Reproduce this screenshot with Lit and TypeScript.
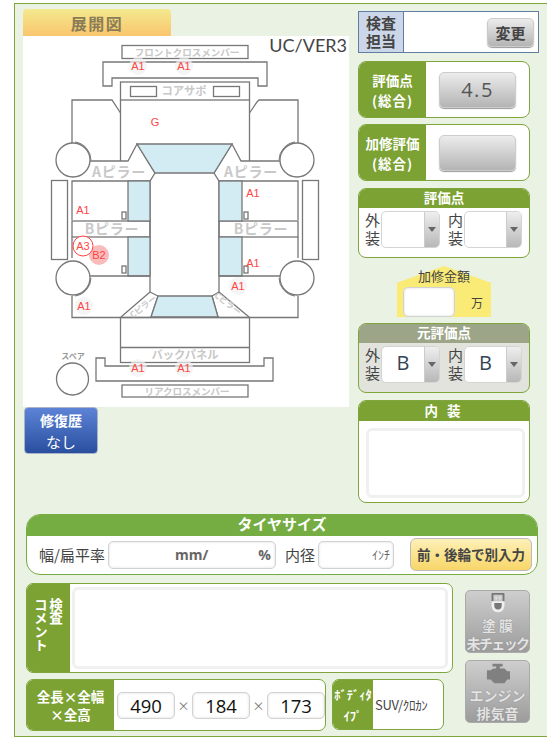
import { LitElement, html, css, svg } from "lit";
import { customElement } from "lit/decorators.js";

const marks: [number, number][] = [[138, 70], [184, 70], [138, 372], [184, 372], [238, 290], [84, 310]];

function diagram() {
  return html`<svg class="car" viewBox="23 36 326 371" width="326" height="371">
    <g class="ln">
      <rect x="122" y="45.5" width="126" height="13"/>
      <path d="M103 86V62H267V86H258V78H112V86Z"/>
      <rect x="120.5" y="82" width="129" height="18"/>
      <rect x="130.500" y="86.500" width="26" height="10"/>
      <rect x="213.500" y="86.500" width="26" height="10"/>
      <path d="M120.500 100V161M249.500 100V161"/>
      <path d="M120.500 113L112 100H72V143M249.500 113L257 102L259 100H298V143"/>
      <path d="M90 161H128L137 144L155 173L150 181H72V220M280 161H241L232 144L214 173L219 181H298V220"/>
      <path class="glass" d="M137 144H232L214 173H155Z"/>
      <path d="M150 181V292M219 181V292"/>
      <rect x="72" y="221" width="78" height="16"/>
      <rect x="219" y="221" width="79" height="16"/>
      <path d="M72 237V258M298 237V258"/>
      <rect class="glass" x="128" y="181" width="22" height="40"/>
      <rect class="glass" x="128" y="237" width="22" height="39"/>
      <rect class="glass" x="219" y="181" width="23" height="40"/>
      <rect class="glass" x="219" y="237" width="23" height="39"/>
      <path d="M90 276H150M219 276H280"/>
      <rect x="122" y="212" width="4" height="7"/>
      <rect x="244" y="212" width="4" height="7"/>
      <rect x="122" y="266" width="4" height="7"/>
      <rect x="244" y="266" width="4" height="7"/>
      <rect x="51.500" y="180.500" width="16" height="79"/>
      <rect x="302.500" y="180.500" width="16" height="79"/>
      <path d="M72 296V317.500H298V296"/>
      <path d="M150 292L121 317M150 292L158 296L151 317M219 292L249 317M219 292L212 296L218 317"/>
      <path class="glass" d="M158 296H212L218 317H151Z"/>
      <rect x="120.500" y="317.500" width="129" height="45"/>
      <path d="M120.500 347.500H249.500"/>
      <path d="M96 358H105V366H264V358H273V381H96Z"/>
      <rect x="122" y="385" width="126" height="12"/>
      <circle class="tire" cx="73" cy="160" r="17"/>
      <circle class="tire" cx="297" cy="160" r="17"/>
      <circle class="tire" cx="73" cy="278" r="17"/>
      <circle class="tire" cx="297" cy="278" r="17"/>
      <path class="thin" d="M75 142A18.500 18.500 0 0 1 91 160M295 142A18.500 18.500 0 0 0 279 160M75 296A18.500 18.500 0 0 0 91 278M295 296A18.500 18.500 0 0 1 279 278"/>
      <circle cx="72.500" cy="379" r="16"/>
    </g>
    <g class="part">
      <text x="187" y="55.500" class="s10">フロントクロスメンバー</text>
      <text x="184" y="95" class="s12">コアサポ</text>
      <text x="119" y="177" class="s15">Aピラー</text>
      <text x="251" y="177" class="s15">Aピラー</text>
      <text x="112" y="234" class="s15">Bピラー</text>
      <text x="261" y="234" class="s15">Bピラー</text>
      <text x="185" y="359" class="s12">バックパネル</text>
      <text x="187" y="395" class="s10">リアクロスメンバー</text>
      <text x="73" y="359" class="s8">スペア</text>
      <text transform="translate(145 309) rotate(-38)" class="s9">Cピラー</text>
      <text transform="translate(226 306) rotate(38)" class="s9">Cピラー</text>
    </g>
    ${marks.map(([x, y]) => svg`<circle class="halo" cx=${x} cy=${y - 4} r="9"/><text class="mk" x=${x} y=${y}>A1</text>`)}
    <text class="mk" x="155" y="126">G</text>
    <text class="mk" x="253" y="197">A1</text>
    <text class="mk" x="83" y="214">A1</text>
    <text class="mk" x="253" y="267">A1</text>
    <circle class="b2" cx="99" cy="255" r="10"/>
    <text class="mk" x="99" y="259">B2</text>
    <circle class="a3" cx="83" cy="246" r="10"/>
    <text class="mk" x="83" y="250">A3</text>
    <text class="ver" x="347" y="52">UC/VER3</text>
  </svg>`;
}

function sel(label: string, value: string) {
  return html`<div class="lb">${label}<br />装</div>
    <div class="sel"><div class="val">${value}</div><div class="arr"><i></i></div></div>`;
}

@customElement("app-root")
export class AppRoot extends LitElement {
  static styles = css`
    :host { display: block; width: 547px; height: 749px; overflow: hidden; background: #fff;
      font-family: "Noto Sans CJK JP", sans-serif; color: #444; }
    .frame { box-sizing: border-box; width: 560px; height: 734px; margin: 3px 0 0 14px; padding: 5px 0 0 8px;
      background: #eaf2e3; border: 1px solid #7ea63c; border-right: 0; }
    .top { display: flex; gap: 9px; align-items: flex-start; }
    .left { width: 326px; display: flex; flex-direction: column; align-items: flex-start; }
    .tab { box-sizing: border-box; width: 148px; height: 27px; border-radius: 4px 4px 0 0;
      background: linear-gradient(#f4e98e, #f9c56e); color: #8a7c55; font-weight: 700; font-size: 16px;
      letter-spacing: 1.500px; display: flex; align-items: center; justify-content: center; }
    .board { width: 326px; height: 371px; background: #fff; }
    .car { display: block; }
    .ln * { fill: none; stroke: #777; stroke-width: 1.300; }
    .ln .glass { fill: #d3ebf3; }
    .ln .tire { fill: #fff; }
    .ln .thin { stroke-width: 1; }
    .part text { fill: #c8c8c8; text-anchor: middle; font-weight: 700; }
    .part .s8 { font-size: 8px; fill: #999; }
    .s9 { font-size: 8.500px; }
    .s10 { font-size: 9.500px; }
    .s12 { font-size: 11.300px; }
    .s15 { font-size: 14px; letter-spacing: .7px; }
    .mk { fill: #f44; font: 11px "Liberation Sans", sans-serif; text-anchor: middle; }
    .halo { fill: #f1f1f1; opacity: .7; }
    .b2 { fill: #f9bcbc; }
    .a3 { fill: #fff; stroke: #f44; stroke-width: 1; }
    .ver { font: 18px Lato, sans-serif; fill: #444; text-anchor: end; }
    .fix { box-sizing: border-box; width: 74px; height: 47px; margin: 0 0 0 1px; border-radius: 4px; border: 1px solid #aab4c8;
      background: linear-gradient(#5c83d6, #2a4f9f); color: #fff; display: flex; flex-direction: column; align-items: center;
      font-size: 15px; line-height: 21px; padding-top: 2px; }
    .fix b { font-size: 14px; }
    .right { width: 181px; margin-top: 2px; display: flex; flex-direction: column; }
    .insp { box-sizing: border-box; height: 42px; display: flex; border: 1px solid #5f7ea0; background: #fff; align-items: stretch; margin-bottom: 8px; }
    .insp-l { width: 44px; background: #cbd6e8; border-right: 1px solid #5f7ea0; font-weight: 700; font-size: 15px; line-height: 18px;
      display: flex; align-items: center; justify-content: center; text-align: center; color: #444; }
    .insp-r { flex: 1; display: flex; align-items: center; justify-content: flex-end; padding-right: 4px; }
    .gbtn { background: linear-gradient(#ececec, #b4b4b4); border: 1px solid #ccc; border-radius: 5px; box-shadow: 0 1px 1px #999;
      box-sizing: border-box; display: flex; align-items: center; justify-content: center; }
    .chg { width: 47px; height: 29px; font-weight: 700; font-size: 15px; color: #444; }
    .box { box-sizing: border-box; width: 172px; border: 1px solid #7ea63c; border-radius: 8px; background: #fff; overflow: hidden; }
    .score { height: 57px; display: flex; align-items: stretch; margin-bottom: 6px; }
    .score-l { width: 67px; background: #7ba233; color: #fff; font-weight: 700; font-size: 13.500px; line-height: 20px;
      display: flex; align-items: center; justify-content: center; text-align: center; white-space: nowrap; }
    .score-l em { font-style: normal; letter-spacing: 1px; }
    .score-r { flex: 1; display: flex; align-items: center; padding-left: 13px; }
    .rate { width: 77px; height: 36px; font: 20px "Open Sans", sans-serif; letter-spacing: 1.500px; color: #555; }
    .hd { height: 19px; background: #7ba233; color: #fff; font-weight: 700; font-size: 13.500px; line-height: 17px; text-align: center; }
    .sels { display: flex; align-items: flex-start; padding: 3px 0 0 6px; }
    .lb { width: 16px; font-size: 15px; line-height: 18px; color: #444; }
    .sel { width: 59px; height: 37px; box-sizing: border-box; display: flex; margin-right: 8px; border-radius: 5px; border: 1px solid #d4d4d4; overflow: hidden; background: #fff; }
    .sels .sel:last-child { width: 58px; margin-right: 0; }
    .val { flex: 1; font: 20px "Open Sans", sans-serif; line-height: 32px; text-align: center; color: #345; }
    .arr { width: 14px; background: linear-gradient(#eee, #b8b8b8); border-left: 1px solid #ccc; display: flex; align-items: center; justify-content: center; }
    .arr i { width: 0; height: 0; border: 4px solid transparent; border-top: 5px solid #666; border-bottom: 0; }
    .ev { height: 70px; margin-top: 1px; }
    .house { box-sizing: border-box; width: 94px; height: 51px; margin: 8px 0 6px 39px; position: relative;
      display: flex; flex-direction: column; align-items: center; }
    .house::before { content: ""; position: absolute; inset: 0; z-index: 0; background: #f9eb76;
      clip-path: polygon(0 33%, 50% 0, 100% 33%, 100% 100%, 0 100%); }
    .house-t { position: relative; font-size: 13px; line-height: 18px; padding-top: 1px; color: #444; white-space: nowrap; }
    .house-r { position: relative; display: flex; align-items: center; gap: 16px; width: 100%; box-sizing: border-box; padding: 2px 0 0 6px; font-size: 12px; }
    .inp { box-sizing: border-box; background: #fff; border: 1px solid #d2d2d2; border-radius: 5px; box-shadow: inset 0 0 3px #ddd; }
    .kin { width: 52px; height: 30px; }
    .orig { height: 70px; margin-bottom: 7px; background: #e1e3dc; }
    .orig .hd { background: #9ca588; }
    .in { height: 103px; }
    .in .hd { height: 20px; line-height: 19px; letter-spacing: 3px; }
    .ta { box-sizing: border-box; background: #fff; border: 3px solid #f0f0f0; border-radius: 6px; }
    .in .ta { width: 159px; height: 70px; margin: 7px 0 0 7px; }
    .tire-s { box-sizing: border-box; width: 512px; height: 61px; margin: 11px 0 8px 3px; border: 1px solid #75ad42; border-radius: 14px; background: #fff; overflow: hidden; }
    .tire-h { box-sizing: border-box; height: 21px; padding-bottom: 3px; background: #75ad42; color: #fff; font-weight: 700; font-size: 15px; line-height: 18px; text-align: center; }
    .tire-b { display: flex; align-items: center; font-size: 15px; padding-left: 12px; height: 37px; }
    .t-in { display: flex; align-items: center; height: 28px; font: 700 14px "Open Sans", sans-serif; color: #666; }
    .wid { width: 168px; margin-left: 3px; padding-left: 66px; gap: 50px; }
    .dia { width: 76px; margin-left: 3px; justify-content: flex-end; padding-right: 3px; font: 400 12px "Noto Sans CJK JP", sans-serif; margin-right: 16px; }
    .lab2 { margin-left: 9px; }
    .sep { box-sizing: border-box; width: 122px; height: 33px; margin-top: -1px; background: linear-gradient(#fdf0b8, #f8d668); border: 1px solid #bbb; border-radius: 6px;
      font-weight: 700; font-size: 13.500px; color: #444; display: flex; align-items: center; justify-content: center; white-space: nowrap; }
    .bottom { display: flex; margin-left: 3px; gap: 12px; align-items: flex-start; }
    .stack { width: 427px; display: flex; flex-direction: column; gap: 6px; }
    .cm { box-sizing: border-box; height: 90px; display: flex; border: 1px solid #7ea63c; border-radius: 7px; background: #fff; overflow: hidden; }
    .cm-l { width: 43px; background: #7ba233; color: #fff; font-weight: 700; font-size: 13.500px; line-height: 14px;
      display: flex; flex-direction: row-reverse; justify-content: center; align-items: flex-start; padding-top: 14px; box-sizing: border-box; gap: 1px; }
    .cm-l span { writing-mode: vertical-rl; }
    .cm .ta { width: 376px; height: 82px; margin: 3px 0 0 2px; }
    .row { display: flex; gap: 6px; align-items: flex-start; }
    .dim { box-sizing: border-box; width: 300px; height: 52px; display: flex; align-items: center; border: 1px solid #7ea63c; border-radius: 7px; background: #fff; overflow: hidden; }
    .dim-l { width: 87px; align-self: stretch; background: #7ba233; color: #fff; font-weight: 700; font-size: 13.500px; line-height: 18px;
      display: flex; align-items: center; justify-content: center; text-align: center; white-space: nowrap; }
    .n { width: 58px; height: 27px; margin-left: 3px; font: 18.500px "Open Sans", sans-serif; color: #111; display: flex; align-items: center; justify-content: center; }
    .x { width: 17px; margin-left: 0; text-align: center; font-size: 12px; color: #777; }
    .x + .n { margin-left: 0; }
    .bt { box-sizing: border-box; width: 112px; height: 51px; display: flex; align-items: center; border: 1px solid #7ea63c; border-radius: 7px; background: #fff; overflow: hidden; }
    .bt-l { width: 40px; align-self: stretch; background: #7ba233; color: #fff; font-weight: 700; font-size: 12.500px; line-height: 21px;
      display: flex; align-items: center; justify-content: center; text-align: center; white-space: nowrap; }
    .bt-v { font-size: 13px; padding-left: 2px; white-space: nowrap; letter-spacing: -.3px; }
    .icons { margin-top: 7px; display: flex; flex-direction: column; gap: 7px; }
    .ic { box-sizing: border-box; width: 65px; height: 63px; border: 1px solid #aaa; border-radius: 5px;
      background: linear-gradient(#cecece, #9c9c9c); color: #e4e4e4; font-weight: 700; font-size: 14px; line-height: 18px;
      display: flex; flex-direction: column; align-items: center; white-space: nowrap; text-shadow: 0 0 1px #777; }
    .ic svg { display: block; margin-top: 1px; }
    .tight { letter-spacing: -1.600px; }
  `;

  render() {
    return html`<div class="frame">
      <div class="top">
        <div class="left">
          <div class="tab">展開図</div>
          <div class="board">${diagram()}</div>
          <div class="fix"><b>修復歴</b><span>なし</span></div>
        </div>
        <div class="right">
          <div class="insp">
            <div class="insp-l">検査<br />担当</div>
            <div class="insp-r"><div class="gbtn chg">変更</div></div>
          </div>
          <div class="box score">
            <div class="score-l"><span>評価点<br /><em>(総合)</em></span></div>
            <div class="score-r"><div class="gbtn rate">4.5</div></div>
          </div>
          <div class="box score">
            <div class="score-l"><span>加修評価<br /><em>(総合)</em></span></div>
            <div class="score-r"><div class="gbtn rate"></div></div>
          </div>
          <div class="box ev">
            <div class="hd">評価点</div>
            <div class="sels">${sel("外", "")}${sel("内", "")}</div>
          </div>
          <div class="house">
            <div class="house-t">加修金額</div>
            <div class="house-r"><div class="inp kin"></div><span>万</span></div>
          </div>
          <div class="box orig">
            <div class="hd">元評価点</div>
            <div class="sels">${sel("外", "B")}${sel("内", "B")}</div>
          </div>
          <div class="box in">
            <div class="hd">内 装</div>
            <div class="ta"></div>
          </div>
        </div>
      </div>
      <div class="tire-s">
        <div class="tire-h">タイヤサイズ</div>
        <div class="tire-b">
          <span>幅/扁平率</span>
          <div class="inp t-in wid"><span>mm/</span><span>%</span></div>
          <span class="lab2">内径</span>
          <div class="inp t-in dia">ｲﾝﾁ</div>
          <div class="sep">前・後輪で別入力</div>
        </div>
      </div>
      <div class="bottom">
        <div class="stack">
          <div class="cm">
            <div class="cm-l"><span>検査</span><span>コメント</span></div>
            <div class="ta"></div>
          </div>
          <div class="row">
            <div class="dim">
              <div class="dim-l"><span>全長×全幅<br />×全高</span></div>
              <div class="inp n">490</div><div class="x">×</div>
              <div class="inp n">184</div><div class="x">×</div>
              <div class="inp n">173</div>
            </div>
            <div class="bt">
              <div class="bt-l"><span>ﾎﾞﾃﾞｨﾀ<br />ｲﾌﾟ</span></div>
              <div class="bt-v">SUV/ｸﾛｶﾝ</div>
            </div>
          </div>
        </div>
        <div class="icons">
          <div class="ic">
            <svg width="24" height="24" viewBox="0 0 24 26"><path fill="#777" d="M6 1h12a1 1 0 0 1 1 1v8h-2V3H7v7H5V2a1 1 0 0 1 1-1z"/><path fill="#eee" d="M5 10h14v5a7 7 0 0 1-14 0z"/><path fill="#777" d="M8 12h8v3a4 4 0 0 1-8 0z"/><path fill="#ddd" d="M9 5h2v3H9zM13 5h2v3h-2z"/></svg>
            <span>塗 膜</span><span class="tight">未チェック</span>
          </div>
          <div class="ic">
            <svg width="30" height="24" viewBox="0 0 30 26"><path fill="#808080" d="M9 2h11v3h-3v2h5l3 3h3v9h-3l-3 4H11l-4-4H3V9h4l3-2h3V5H9z"/></svg>
            <span>エンジン</span><span>排気音</span>
          </div>
        </div>
      </div>
    </div>`;
  }
}
